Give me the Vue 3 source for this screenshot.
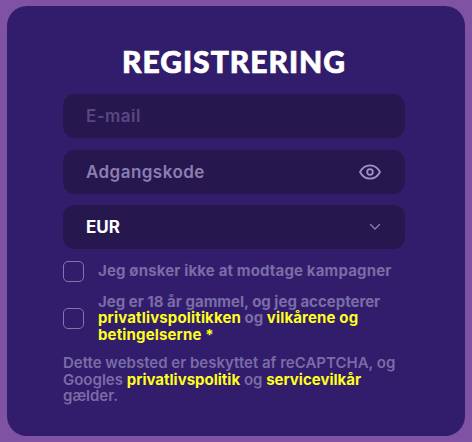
<template>
  <div class="page">
    <form class="card" @submit.prevent>
      <h1 class="title">REGISTRERING</h1>

      <div class="field">
        <input v-model="email" class="field__input" type="text" placeholder="E-mail" />
      </div>

      <div class="field">
        <input v-model="password" class="field__input field__input--strong" type="password" placeholder="Adgangskode" />
        <svg class="eye" xmlns="http://www.w3.org/2000/svg" width="24" height="24" viewBox="0 0 24 24" fill="none" stroke="#a093c4" stroke-width="1.800" stroke-linecap="round" stroke-linejoin="round">
          <path d="M2 12c2.400-4.400 5.700-6.700 10-6.700s7.600 2.300 10 6.700c-2.400 4.400-5.700 6.700-10 6.700s-7.600-2.300-10-6.700z"></path>
          <circle cx="12" cy="12" r="2.800"></circle>
        </svg>
      </div>

      <div class="field field--select">
        <span class="field__value">EUR</span>
        <svg class="chevron" xmlns="http://www.w3.org/2000/svg" width="12" height="8" viewBox="0 0 12 8" fill="none" stroke="#8d7fb3" stroke-width="1.300" stroke-linecap="round" stroke-linejoin="round">
          <polyline points="1.500,1.500 6,6 10.500,1.500"></polyline>
        </svg>
      </div>

      <label class="check check--first">
        <span class="check__box"></span>
        <span class="check__text">Jeg ønsker ikke at modtage kampagner</span>
      </label>

      <label class="check">
        <span class="check__box"></span>
        <span class="check__text">
          Jeg er 18 år gammel, og jeg accepterer
          <a class="link link--wide">privatlivspolitikken</a> og <a class="link link--wide">vilkårene og betingelserne *</a>
        </span>
      </label>

      <p class="notice">
        Dette websted er beskyttet af reCAPTCHA, og Googles
        <a class="link">privatlivspolitik</a> og <a class="link">servicevilkår</a> gælder.
      </p>
    </form>
  </div>
</template>

<script setup>
import { ref } from 'vue'

const email = ref('')
const password = ref('')
</script>

<style>
body {
  background: #7f52a3;
}
</style>

<style scoped>
.page {
  box-sizing: border-box;
  width: 472px;
  height: 442px;
  padding: 6px 7px;
  background: #7f52a3;
  font-family: "Inter", "Noto Sans", sans-serif;
}

.card {
  box-sizing: border-box;
  height: 430px;
  padding: 38px 60px 0 56px;
  background: #311d6b;
  border-radius: 20px;
}

.title {
  margin: 0 0 16px;
  text-align: center;
  color: #fff;
  font-size: 30px;
  line-height: 34px;
  font-weight: 900;
  letter-spacing: 1px;
  font-family: "Lato", sans-serif;
  -webkit-text-stroke: 0.7px #fff;
}

.field {
  display: flex;
  align-items: center;
  height: 44px;
  margin-bottom: 11.500px;
  padding: 0 23px;
  background: #26174f;
  border-radius: 12px;
}

.field__input {
  flex: 1;
  min-width: 0;
  padding: 0;
  border: 0;
  outline: 0;
  background: transparent;
  color: #fff;
  font: 600 17px "Inter", sans-serif;
  letter-spacing: 0.450px;
}

.field__input::placeholder {
  color: #5a4684;
  opacity: 1;
}

.field__input--strong::placeholder {
  color: #8c7eb0;
}

.eye {
  flex: none;
  margin-right: 0;
}

.field--select {
  justify-content: space-between;
}

.field__value {
  color: #fff;
  font-size: 17px;
  font-weight: 700;
}

.chevron {
  margin-right: 1px;
}

.check {
  display: flex;
  align-items: center;
  gap: 14px;
  margin-bottom: 12px;
}

.check--first {
  margin-top: 11px;
  letter-spacing: 0.150px;
}

.check__box {
  flex: none;
  box-sizing: border-box;
  width: 21px;
  height: 21px;
  border: 1px solid #8275aa;
  border-radius: 5px;
}

.check__text,
.notice {
  color: #7a6ca6;
  font-size: 15px;
  line-height: 16.500px;
  font-weight: 700;
}

.notice {
  margin: 11px 0 0;
  font-weight: 600;
}

.link {
  color: #ffff20;
  font-weight: 700;
}

.link--wide {
  letter-spacing: 0.150px;
}
</style>
